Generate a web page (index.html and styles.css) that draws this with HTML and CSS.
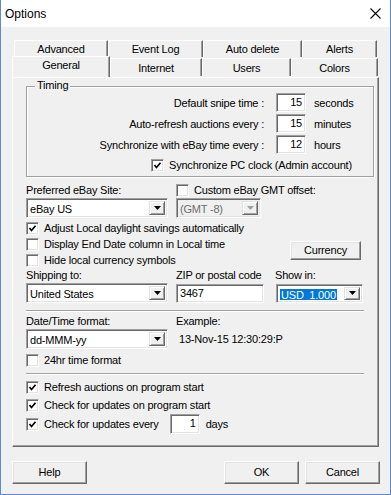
FILE: index.html
```html
<!DOCTYPE html>
<html lang="en">
<head>
  <meta charset="UTF-8">
  <title>Options</title>
  <link rel="stylesheet" href="styles.css">
</head>
<body>
  <div class="window">
    <div class="titlebar">
      <span class="title">Options</span>
      <svg class="close" width="11" height="11" viewBox="0 0 11 11">
        <path d="M0.5 0.5 L10.5 10.5 M10.5 0.5 L0.5 10.5" stroke="#000" stroke-width="1.1" fill="none"/>
      </svg>
    </div>

    <div class="client">
      <div class="tabs">
        <div class="tab-row back">
          <div class="tab t-adv">Advanced</div>
          <div class="tab t-log">Event Log</div>
          <div class="tab t-del">Auto delete</div>
          <div class="tab t-alerts">Alerts</div>
        </div>
        <div class="tab-row front">
          <div class="tab active t-gen">General</div>
          <div class="tab t-net">Internet</div>
          <div class="tab t-users">Users</div>
          <div class="tab t-colors">Colors</div>
        </div>
      </div>

      <div class="panel">
        <!-- Timing -->
        <div class="group">
          <span class="group-title">Timing</span>
          <div class="trow">
            <span class="tlabel">Default snipe time :</span>
            <div class="field num">15</div>
            <span class="unit">seconds</span>
          </div>
          <div class="trow">
            <span class="tlabel">Auto-refresh auctions every :</span>
            <div class="field num">15</div>
            <span class="unit">minutes</span>
          </div>
          <div class="trow">
            <span class="tlabel">Synchronize with eBay time every :</span>
            <div class="field num">12</div>
            <span class="unit">hours</span>
          </div>
          <div class="check sync">
            <span class="cb on"></span>Synchronize PC clock (Admin account)
          </div>
        </div>

        <!-- eBay site -->
        <div class="row labels first">
          <span class="col1">Preferred eBay Site:</span>
          <div class="check inline"><span class="cb"></span>Custom eBay GMT offset:</div>
        </div>
        <div class="row">
          <div class="combo w142"><span class="combo-text">eBay US</span><span class="combo-btn"></span></div>
          <div class="combo w85 disabled gap8"><span class="combo-text">(GMT -8)</span><span class="combo-btn"></span></div>
        </div>

        <div class="row options">
          <div class="checks">
            <div class="check"><span class="cb on"></span>Adjust Local daylight savings automatically</div>
            <div class="check"><span class="cb"></span>Display End Date column in Local time</div>
            <div class="check"><span class="cb"></span>Hide local currency symbols</div>
          </div>
          <div class="btn currency">Currency</div>
        </div>

        <div class="row labels">
          <span class="col1">Shipping to:</span>
          <span class="col2">ZIP or postal code</span>
          <span>Show in:</span>
        </div>
        <div class="row">
          <div class="combo w142"><span class="combo-text">United States</span><span class="combo-btn"></span></div>
          <div class="field zip gap8">3467</div>
          <div class="combo w87 gap12"><span class="combo-text"><span class="selected">USD&nbsp; 1.000</span></span><span class="combo-btn"></span></div>
        </div>

        <div class="sep"></div>

        <div class="row labels date-labels">
          <span class="col1">Date/Time format:</span>
          <span>Example:</span>
        </div>
        <div class="row">
          <div class="combo w142"><span class="combo-text">dd-MMM-yy</span><span class="combo-btn"></span></div>
          <span class="example">13-Nov-15 12:30:29:P</span>
        </div>
        <div class="check hr24"><span class="cb"></span>24hr time format</div>

        <div class="sep second"></div>

        <div class="check tall first-tall"><span class="cb on"></span>Refresh auctions on program start</div>
        <div class="check tall"><span class="cb on"></span>Check for updates on program start</div>
        <div class="check every">
          <span class="cb on"></span>Check for updates every
          <div class="field num small">1</div>
          <span class="days">days</span>
        </div>
      </div>

      <div class="buttons">
        <div class="btn">Help</div>
        <div class="btn ok">OK</div>
        <div class="btn">Cancel</div>
      </div>
    </div>
  </div>
</body>
</html>
```

FILE: styles.css
```css
* {
  box-sizing: border-box;
}

body {
  margin: 0;
  font-family: "Liberation Sans", Arial, sans-serif;
  font-size: 11px;
  letter-spacing: -0.2px;
  color: #000;
  background-color: #f0f0f0;
}

.window {
  width: 391px;
  height: 495px;
  border: 1px solid #5b8ad1;
  border-top: none;
  background-color: #f0f0f0;
  display: flex;
  flex-direction: column;
}

.titlebar {
  height: 27px;
  background-color: #fff;
  display: flex;
  align-items: center;
  justify-content: space-between;
  padding: 0 9px 0 4px;
  font-size: 12px;
  letter-spacing: 0;
}

.close {
  display: block;
}

/* Tabs */
.tabs {
  padding: 13px 0 0 11px;
}

.tab-row {
  display: flex;
}

.tab-row.back {
  margin-left: 2px;
}

.tab {
  height: 17px;
  line-height: 16px;
  text-align: center;
  border-top: 1px solid #fff;
  border-left: 1px solid #fff;
  border-right: 1px solid #696969;
  box-shadow: inset -1px 0 #a0a0a0;
  background-color: #f0f0f0;
}

.tab-row.front .tab {
  margin-top: 1px;
  height: 18px;
  line-height: 18px;
}

.tab-row.front .tab.active {
  position: relative;
  z-index: 1;
  margin-top: -1px;
  height: 21px;
  line-height: 16px;
}

.t-adv { width: 94px; }
.t-log { width: 95px; }
.t-del { width: 99px; }
.t-alerts { width: 75px; }
.t-gen { width: 98px; }
.t-net { width: 92px; }
.t-users { width: 89px; }
.t-colors { width: 87px; }

/* Panel */
.panel {
  margin-left: 11px;
  width: 367px;
  height: 370px;
  border-top: 1px solid #fff;
  border-left: 1px solid #fff;
  border-right: 1px solid #696969;
  border-bottom: 1px solid #696969;
  box-shadow: inset -1px -1px #a0a0a0;
  padding: 8px 0 0 13px;
}

.group {
  position: relative;
  width: 348px;
  height: 91px;
  border: 1px solid #a0a0a0;
  box-shadow: inset 1px 1px #fff, 1px 1px #fff;
  padding-top: 6px;
}

.group-title {
  position: absolute;
  top: -8px;
  left: 8px;
  padding: 0 2px;
  background-color: #f0f0f0;
}

.trow {
  display: flex;
  align-items: center;
  height: 19px;
  margin-bottom: 2px;
}

.tlabel {
  width: 237px;
  text-align: right;
}

.unit {
  margin-left: 8px;
}

.field {
  height: 19px;
  margin-left: 12px;
  background-color: #fff;
  border: 1px solid;
  border-color: #a0a0a0 #fff #fff #a0a0a0;
  box-shadow: inset 1px 1px #696969, inset -1px -1px #e3e3e3;
  line-height: 17px;
  padding: 0 3px;
}

.field.num {
  width: 30px;
  text-align: right;
}

.field.zip {
  width: 88px;
  height: 19px;
}

.field.small {
  height: 20px;
  margin-left: 11px;
}

/* Checkboxes */
.check {
  display: flex;
  align-items: center;
  height: 16px;
  white-space: nowrap;
}

.cb {
  width: 13px;
  height: 13px;
  margin-right: 5px;
  flex-shrink: 0;
  background-color: #fff;
  border: 1px solid;
  border-color: #a0a0a0 #fff #fff #a0a0a0;
  box-shadow: inset 1px 1px #696969, inset -1px -1px #e3e3e3;
}

.cb.on {
  background: #fff url("data:image/svg+xml,%3Csvg xmlns='http://www.w3.org/2000/svg' width='11' height='11'%3E%3Cpath d='M2.5 5 L4.5 7.5 L8.5 2.8' stroke='%23000' stroke-width='1.7' fill='none'/%3E%3C/svg%3E") no-repeat center;
}

.check.sync {
  height: 14px;
  margin-top: 4px;
  margin-left: 124px;
}

.check.inline {
  height: 14px;
}

/* Generic rows */
.row {
  display: flex;
  align-items: center;
}

.row.labels {
  height: 14px;
  margin-bottom: 1px;
}

.row.labels.first {
  margin-top: 6px;
}

.col1 {
  width: 150px;
}

.col2 {
  width: 99px;
}

.gap8 { margin-left: 8px; }
.gap12 { margin-left: 12px; }

.combo {
  display: flex;
  height: 20px;
  background-color: #fff;
  border: 1px solid;
  border-color: #a0a0a0 #fff #fff #a0a0a0;
  box-shadow: inset 1px 1px #696969, inset -1px -1px #e3e3e3;
  padding: 2px;
}

.w142 { width: 142px; }
.w85 { width: 85px; }
.w87 { width: 87px; height: 19px; }

.combo-text {
  flex: 1;
  line-height: 16px;
  padding-left: 1px;
  overflow: hidden;
  white-space: nowrap;
}

.combo-btn {
  width: 16px;
  background: #f0f0f0 url("data:image/svg+xml,%3Csvg xmlns='http://www.w3.org/2000/svg' width='7' height='4'%3E%3Cpath d='M0 0 H7 L3.5 4 Z' fill='%23000'/%3E%3C/svg%3E") no-repeat center;
  border: 1px solid;
  border-color: #e3e3e3 #696969 #696969 #e3e3e3;
  box-shadow: inset 1px 1px #fff, inset -1px -1px #a0a0a0;
}

.combo.disabled {
  background-color: #f0f0f0;
  color: #6d6d6d;
}

.combo.disabled .combo-btn {
  background-image: url("data:image/svg+xml,%3Csvg xmlns='http://www.w3.org/2000/svg' width='7' height='4'%3E%3Cpath d='M0 0 H7 L3.5 4 Z' fill='%23a0a0a0'/%3E%3C/svg%3E");
}

.selected {
  display: inline-block;
  background-color: #0078d7;
  color: #fff;
  line-height: 13px;
  padding: 0 1px;
}

.row.options {
  align-items: flex-start;
  margin-top: 2px;
  height: 48px;
}

.btn {
  height: 23px;
  width: 75px;
  text-align: center;
  line-height: 20px;
  background-color: #f0f0f0;
  border: 1px solid;
  border-color: #fff #696969 #696969 #fff;
  box-shadow: inset -1px -1px #a0a0a0, inset 1px 1px #e3e3e3;
}

.btn.currency {
  width: 71px;
  height: 19px;
  line-height: 16px;
  margin-top: 21px;
  margin-left: auto;
  margin-right: 17px;
}

.sep {
  width: 338px;
  height: 2px;
  margin-top: 7px;
  border-top: 1px solid #a0a0a0;
  border-bottom: 1px solid #fff;
}

.sep.second {
  margin-top: 5px;
}

.row.date-labels {
  margin-top: 2px;
}

.example {
  margin-left: 11px;
}

.check.hr24 {
  margin-top: 3px;
}

.check.tall {
  height: 18px;
}

.check.first-tall {
  margin-top: 3px;
}

.check.every {
  height: 20px;
}

.days {
  margin-left: 6px;
}

/* Dialog buttons */
.buttons {
  display: flex;
  margin: 14px 0 0 11px;
}

.buttons .btn.ok {
  margin-left: auto;
  margin-right: 6px;
}

.buttons .btn:last-child {
  margin-right: 10px;
}
```
